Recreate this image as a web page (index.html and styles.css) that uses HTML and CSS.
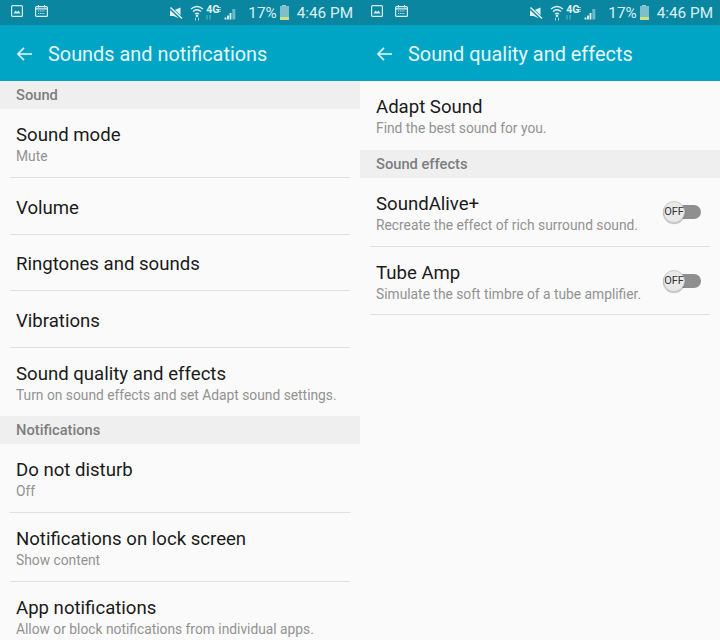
FILE: index.html
```html
<!DOCTYPE html>
<html lang="en">
<head>
  <meta charset="UTF-8" />
  <title>Sounds and notifications</title>
  <link rel="stylesheet" href="styles.css">
</head>
<body>
  <svg class="defs" width="0" height="0">
    <symbol id="status-icons" viewBox="0 0 67 16">
      <path d="M1 5.500 H4.500 L11.500 2.500 V14 L4.500 11 H1 Z" fill="#e2f3f7"/>
      <path d="M0.500 2 L13.500 14.500" stroke="#0a86a1" stroke-width="3.400"/>
      <path d="M1.500 2.500 L13 13.500" stroke="#e2f3f7" stroke-width="1.500"/>
      <path d="M22 4 Q28 -1 34 4 M24 6.500 Q28 3 32 6.500 M26 9 Q28 7.500 30 9" fill="none" stroke="#e2f3f7" stroke-width="1.300"/>
      <circle cx="28" cy="10.800" r="1.300" fill="#e2f3f7"/>
      <path d="M26.500 12.500 V15.500 M29.500 12.500 V15.500" stroke="#9ad4df" stroke-width="1"/>
      <path d="M38 10 V14.500 M41 10 V14.500" stroke="#62b6c8" stroke-width="1"/>
      <path d="M49 2.500 H52 M49 4.500 H52 M49 6.500 H52" stroke="#a8dbe5" stroke-width="0.800"/>
      <path d="M56.500 14.500 V12.500 M59 14.500 V10.500 M61.500 14.500 V8" stroke="#e6f5f8" stroke-width="1.800"/>
      <path d="M64.800 14.500 V4" stroke="#6bb9ca" stroke-width="3"/>
    </symbol>
    <symbol id="back-arrow" viewBox="0 0 18 16">
      <path d="M17 8 H2 M8.500 1.500 L2 8 L8.500 14.500" fill="none" stroke="currentColor" stroke-width="1.600"/>
    </symbol>
  </svg>

  <div class="screens">
    <section class="screen">
      <div class="status-bar">
        <div class="status-left">
          <svg class="status-pic" viewBox="0 0 12 12"><rect x="0.600" y="0.600" width="10.800" height="10.800" rx="1" fill="none" stroke="#d9f0f5" stroke-width="1.200"/><path d="M2.500 8.500 L4.500 5.500 L6 7 L7.500 5.500 L9.500 8.500 Z" fill="#d9f0f5"/></svg>
          <svg class="status-cal" viewBox="0 0 13 12"><rect x="0.600" y="1.600" width="11.800" height="9.800" rx="1" fill="none" stroke="#d9f0f5" stroke-width="1.200"/><path d="M3.500 0 V2.500 M9.500 0 V2.500 M1 3.800 H12" stroke="#d9f0f5" stroke-width="1.200"/><path d="M3 6 H10 M3 8.500 H10" stroke="#d9f0f5" stroke-width="1.200" stroke-dasharray="1.200 1"/></svg>
        </div>
        <div class="status-right">
          <div class="status-icons">
            <svg class="status-glyphs"><use href="#status-icons"/></svg>
            <span class="net-label">4G</span>
          </div>
          <span class="battery-pct">17%</span>
          <span class="battery"><span class="battery-cap"></span><span class="battery-body"></span></span>
          <span class="clock">4:46 PM</span>
        </div>
      </div>
      <header class="app-bar">
        <svg class="back"><use href="#back-arrow"/></svg>
        <h1>Sounds and notifications</h1>
      </header>
      <h2 class="group">Sound</h2>
      <div class="row row-tall"><h3>Sound mode</h3><p>Mute</p></div>
      <div class="row"><h3>Volume</h3></div>
      <div class="row row-h56"><h3>Ringtones and sounds</h3></div>
      <div class="row"><h3>Vibrations</h3></div>
      <div class="row row-tall row-h68 row-last"><h3>Sound quality and effects</h3><p>Turn on sound effects and set Adapt sound settings.</p></div>
      <h2 class="group">Notifications</h2>
      <div class="row row-tall"><h3>Do not disturb</h3><p>Off</p></div>
      <div class="row row-tall"><h3>Notifications on lock screen</h3><p>Show content</p></div>
      <div class="row row-tall row-last"><h3>App notifications</h3><p>Allow or block notifications from individual apps.</p></div>
    </section>

    <section class="screen">
      <div class="status-bar">
        <div class="status-left">
          <svg class="status-pic" viewBox="0 0 12 12"><rect x="0.600" y="0.600" width="10.800" height="10.800" rx="1" fill="none" stroke="#d9f0f5" stroke-width="1.200"/><path d="M2.500 8.500 L4.500 5.500 L6 7 L7.500 5.500 L9.500 8.500 Z" fill="#d9f0f5"/></svg>
          <svg class="status-cal" viewBox="0 0 13 12"><rect x="0.600" y="1.600" width="11.800" height="9.800" rx="1" fill="none" stroke="#d9f0f5" stroke-width="1.200"/><path d="M3.500 0 V2.500 M9.500 0 V2.500 M1 3.800 H12" stroke="#d9f0f5" stroke-width="1.200"/><path d="M3 6 H10 M3 8.500 H10" stroke="#d9f0f5" stroke-width="1.200" stroke-dasharray="1.200 1"/></svg>
        </div>
        <div class="status-right">
          <div class="status-icons">
            <svg class="status-glyphs"><use href="#status-icons"/></svg>
            <span class="net-label">4G</span>
          </div>
          <span class="battery-pct">17%</span>
          <span class="battery"><span class="battery-cap"></span><span class="battery-body"></span></span>
          <span class="clock">4:46 PM</span>
        </div>
      </div>
      <header class="app-bar">
        <svg class="back"><use href="#back-arrow"/></svg>
        <h1>Sound quality and effects</h1>
      </header>
      <div class="row row-tall row-last"><h3>Adapt Sound</h3><p>Find the best sound for you.</p></div>
      <h2 class="group">Sound effects</h2>
      <div class="row row-tall row-toggle">
        <div><h3>SoundAlive+</h3><p>Recreate the effect of rich surround sound.</p></div>
        <div class="switch"><span class="knob">OFF</span></div>
      </div>
      <div class="row row-tall row-h68 row-toggle">
        <div><h3>Tube Amp</h3><p>Simulate the soft timbre of a tube amplifier.</p></div>
        <div class="switch"><span class="knob">OFF</span></div>
      </div>
    </section>
  </div>
</body>
</html>
```

FILE: styles.css
```css
*, *::before, *::after {
  box-sizing: border-box;
}
html, body {
  height: 100%;
}
body {
  margin: 0;
  background: #fafafa;
  font-family: Roboto, 'Liberation Sans', sans-serif;
  color: #1a1a1a;
  overflow: hidden;
}
.defs {
  position: absolute;
}
.screens {
  display: grid;
  grid-template-columns: 360px 360px;
  height: 640px;
  overflow: hidden;
}
.screen {
  height: 640px;
  overflow: hidden;
}
.status-bar {
  height: 25px;
  background: #0a86a1;
  display: flex;
  justify-content: space-between;
  align-items: center;
  padding: 0 7px 0 11px;
  color: #d9f0f5;
}
.status-left {
  display: flex;
  align-items: center;
  gap: 12px;
  margin-bottom: 3px;
}
.status-pic {
  width: 12px;
  height: 12px;
}
.status-cal {
  width: 13px;
  height: 12px;
}
.status-right {
  display: flex;
  align-items: center;
}
.status-icons {
  position: relative;
  width: 67px;
  height: 16px;
  margin-right: 12px;
}
.status-glyphs {
  width: 67px;
  height: 16px;
  display: block;
}
.net-label {
  position: absolute;
  left: 37px;
  top: 0;
  font-size: 10.500px;
  font-weight: 700;
  line-height: 10px;
  color: #e2f3f7;
}
.battery-pct, .clock {
  font-size: 15.300px;
  line-height: 25px;
  padding-top: 1px;
}
.battery {
  display: flex;
  flex-direction: column;
  align-items: center;
  width: 9px;
  margin: 0 8px 0 3px;
}
.battery-cap {
  width: 4px;
  height: 1px;
  background: #9bd0da;
}
.battery-body {
  width: 9px;
  height: 14px;
  background: linear-gradient(#7fbfcc 0, #7fbfcc 80%, #cfe08a 80%);
}
.app-bar {
  height: 56px;
  background: #00a5c5;
  display: flex;
  align-items: center;
  padding: 2px 0 0 16px;
  color: #e4f7fa;
}
.back {
  width: 17px;
  height: 16px;
  margin-right: 15px;
}
.app-bar h1 {
  margin: 0;
  font-size: 19.900px;
  font-weight: 400;
}
.group {
  margin: 0;
  height: 28px;
  background: #efeff0;
  color: #7d7d7d;
  font-size: 14.700px;
  font-weight: 500;
  line-height: 29px;
  padding-left: 16px;
}
.row {
  height: 57px;
  margin: 0 10px;
  padding: 3px 6px 0;
  border-bottom: 1px solid #dfdfdf;
  display: flex;
  flex-direction: column;
  justify-content: center;
}
.row-h56 {
  height: 56px;
}
.row-tall {
  height: 69px;
  padding-top: 15px;
  justify-content: flex-start;
}
.row-tall.row-h68 {
  height: 68px;
}
.row-last {
  border-bottom: 0;
}
.row h3 {
  margin: 0;
  font-size: 18.600px;
  font-weight: 400;
  line-height: 22px;
}
.row p {
  margin: 1px 0 0;
  font-size: 13.800px;
  line-height: 18px;
  color: #929292;
}
.row-toggle {
  flex-direction: row;
  justify-content: space-between;
  align-items: flex-start;
}
.switch {
  position: relative;
  width: 38px;
  height: 14px;
  margin: 12px 3px 0 0;
  background: #8f8f8f;
  border-radius: 7px;
}
.knob {
  position: absolute;
  left: 0;
  top: -4px;
  width: 22px;
  height: 22px;
  border-radius: 50%;
  background: #e9e9e9;
  border: 1px solid #cccccc;
  box-shadow: 0 1px 1px rgba(0,0,0,0.25);
  font-size: 11px;
  line-height: 20px;
  text-align: center;
  color: #333;
}
```
